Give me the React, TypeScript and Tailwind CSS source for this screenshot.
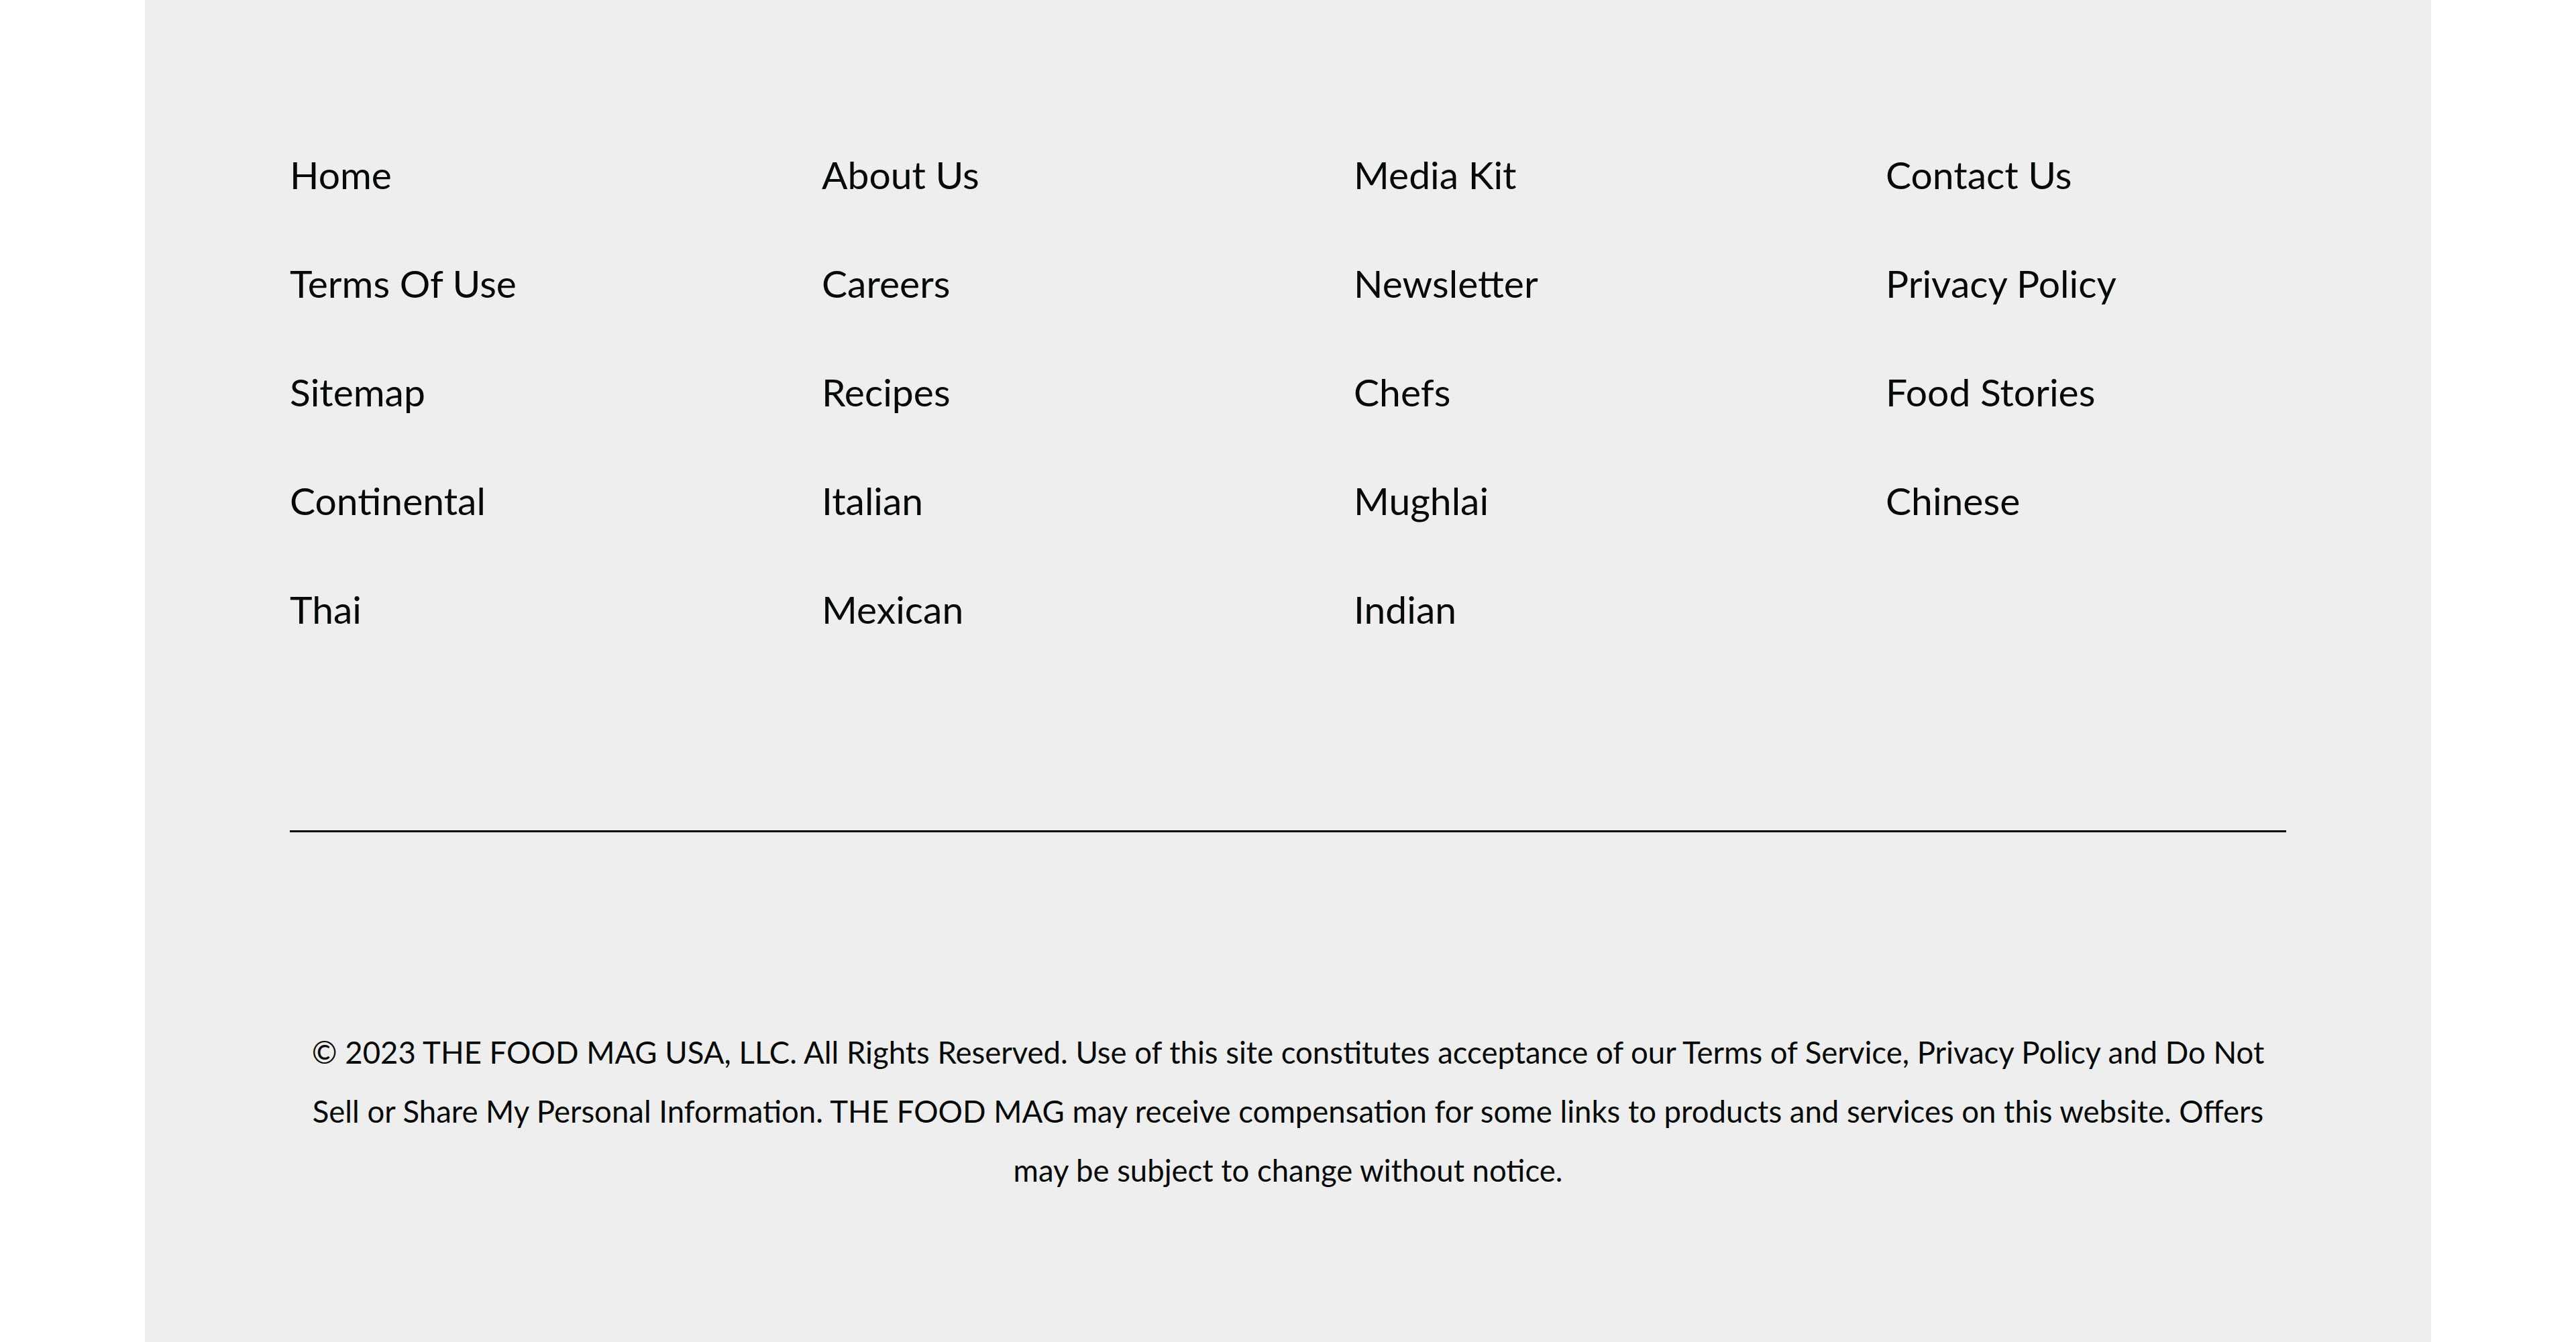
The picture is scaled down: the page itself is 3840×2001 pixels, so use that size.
const LINK_COLUMNS: string[][] = [
  ["Home", "Terms Of Use", "Sitemap", "Continental", "Thai"],
  ["About Us", "Careers", "Recipes", "Italian", "Mexican"],
  ["Media Kit", "Newsletter", "Chefs", "Mughlai", "Indian"],
  ["Contact Us", "Privacy Policy", "Food Stories", "Chinese"],
];

function FooterLinks() {
  return (
    <div className="grid grid-cols-4 gap-x-[196px]">
      {LINK_COLUMNS.map((col, i) => (
        <ul key={i} className="flex flex-col gap-y-[92px]">
          {col.map((label) => (
            <li key={label}>
              <a href="#" className="text-[57px] leading-[70px] text-[#050a07] whitespace-nowrap">
                {label}
              </a>
            </li>
          ))}
        </ul>
      ))}
    </div>
  );
}

export default function App() {
  return (
    <div className="min-h-screen w-full bg-white font-['Lato','Liberation_Sans',sans-serif]">
      <footer className="mx-auto w-[3408px] bg-[#eeeeee] px-[216px] pt-[225px] pb-[220px]">
        <FooterLinks />

        {/* Divider */}
        <div className="mt-[295px] h-[3px] w-full bg-[#050a07]" />

        <p className="mt-[284px] text-center text-[45.5px] leading-[88px] text-[#050a07]">
          © 2023 THE FOOD MAG USA, LLC. All Rights Reserved. Use of this site constitutes acceptance of our Terms of Service, Privacy Policy and Do Not
          <br />
          Sell or Share My Personal Information. THE FOOD MAG may receive compensation for some links to products and services on this website. Offers
          <br />
          may be subject to change without notice.
        </p>
      </footer>
    </div>
  );
}
